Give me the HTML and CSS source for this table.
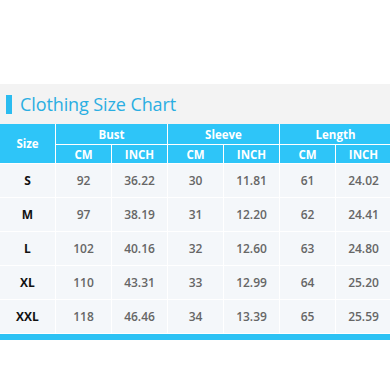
FILE: index.html
```html
<!DOCTYPE html>
<html>
<head>
<meta charset="utf-8">
<link rel="stylesheet" href="styles.css">
</head>
<body>
<div class="page">
  <div class="spacer"></div>
  <section class="chart">
    <h1 class="title"><span class="mark"></span>Clothing Size Chart</h1>
    <div class="grid">
      <div class="hd size">Size</div>
      <div class="hd group">Bust</div>
      <div class="hd group">Sleeve</div>
      <div class="hd group">Length</div>
      <div class="hd sub">CM</div><div class="hd sub">INCH</div>
      <div class="hd sub">CM</div><div class="hd sub">INCH</div>
      <div class="hd sub">CM</div><div class="hd sub">INCH</div>

      <div class="c lbl">S</div><div class="c">92</div><div class="c">36.22</div><div class="c">30</div><div class="c">11.81</div><div class="c">61</div><div class="c">24.02</div>
      <div class="c lbl">M</div><div class="c">97</div><div class="c">38.19</div><div class="c">31</div><div class="c">12.20</div><div class="c">62</div><div class="c">24.41</div>
      <div class="c lbl">L</div><div class="c">102</div><div class="c">40.16</div><div class="c">32</div><div class="c">12.60</div><div class="c">63</div><div class="c">24.80</div>
      <div class="c lbl">XL</div><div class="c">110</div><div class="c">43.31</div><div class="c">33</div><div class="c">12.99</div><div class="c">64</div><div class="c">25.20</div>
      <div class="c lbl">XXL</div><div class="c">118</div><div class="c">46.46</div><div class="c">34</div><div class="c">13.39</div><div class="c">65</div><div class="c">25.59</div>
    </div>
    <div class="bottom"></div>
  </section>
</div>
</body>
</html>
```
FILE: styles.css
```css
* { box-sizing: border-box; }
html, body { margin: 0; padding: 0; background: #fff; }
body { font-family: "Open Sans", "Noto Sans", Arial, sans-serif; }
.page { width: 390px; height: 390px; overflow: hidden; }
.spacer { height: 84px; }
.chart { background: #f3f3f3; }
.title {
  margin: 0;
  height: 40px;
  display: flex;
  align-items: center;
  gap: 8px;
  padding-left: 6px;
  font-size: 18px;
  font-weight: 400;
  color: #2aaee2;
  letter-spacing: -0.1px;
}
.mark { width: 6px; height: 19px; background: #2bbcf0; display: block; }
.grid {
  display: grid;
  grid-template-columns: 55px repeat(6, 55px);
  gap: 1px;
  width: 392px;
  background: #fff;
}
.hd {
  background: #2ec5f8;
  color: #fff;
  font-weight: 700;
  font-size: 11.5px;
  display: flex;
  align-items: center;
  justify-content: center;
}
.hd.size { grid-row: span 2; }
.hd.group { grid-column: span 2; height: 20px; }
.hd.sub { height: 18px; }
.c {
  background: #f4f7fa;
  height: 33px;
  display: flex;
  align-items: center;
  justify-content: center;
  font-size: 12px;
  font-weight: 600;
  color: #666;
}
.c.lbl { color: #111; font-weight: 700; }
.bottom { height: 7px; background: #2cc2f4; border-top: 1px solid #fff; }
```
